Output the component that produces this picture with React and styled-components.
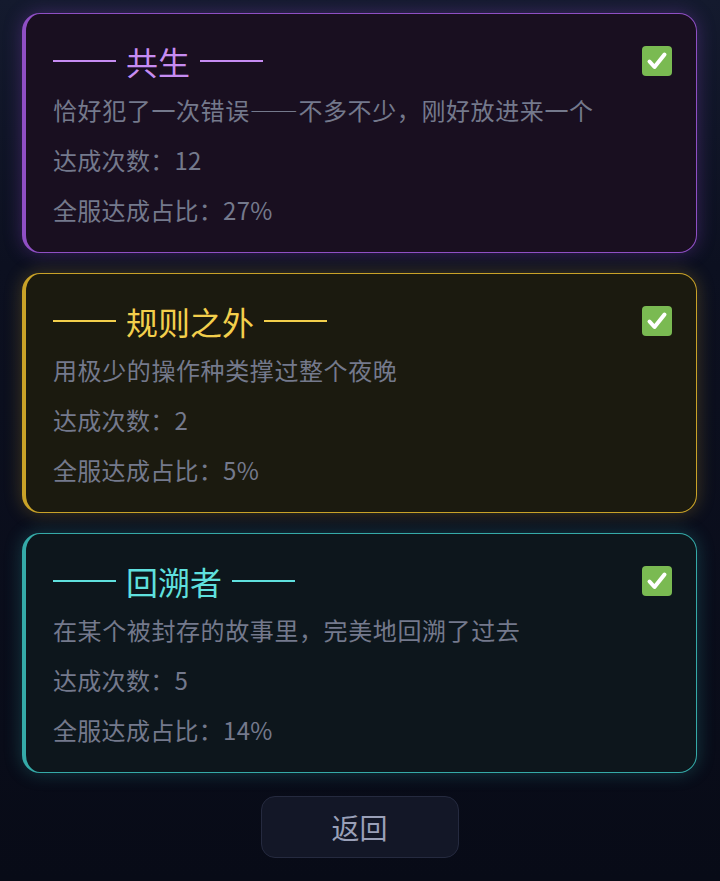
import React from 'react'
import styled, { createGlobalStyle } from 'styled-components'

const Global = createGlobalStyle`
  html, body {
    margin: 0;
    background: #080b17;
  }
  body {
    font-family: "Noto Sans CJK SC", "Noto Sans", sans-serif;
  }
`

const Page = styled.div`
  min-height: 881px;
  box-sizing: border-box;
  padding: 13px 23px 0 22px;
  background: linear-gradient(180deg, #141a2e 0%, #0c1020 30%, #080b17 100%);
  display: flex;
  flex-direction: column;
  gap: 20px;
`

const Card = styled.div`
  position: relative;
  box-sizing: border-box;
  height: 240px;
  padding: 22px 24px 0 27px;
  border-radius: 18px;
  border: 1px solid ${p => p.$border};
  border-left: 4px solid ${p => p.$border};
  background: ${p => p.$bg};
  box-shadow: 0 0 18px ${p => p.$glow};
`

const Head = styled.div`
  display: flex;
  justify-content: space-between;
  align-items: center;
  height: 49px;
`

const Title = styled.div`
  display: flex;
  align-items: center;
  gap: 10px;
  color: ${p => p.$color};
  font-size: 32px;
  line-height: 48px;
`

const Dash = styled.span`
  display: block;
  width: 63px;
  height: 2px;
  background: ${p => p.$color};
`

const Line = styled.div`
  color: #74798c;
  font-size: 24px;
  line-height: 50px;
  letter-spacing: ${p => (p.$full ? '0.6px' : '0.3px')};
  white-space: nowrap;
  font-feature-settings: ${p => (p.$full ? '"fwid"' : 'normal')};
`

const Check = () => (
  <svg width="30" height="30" viewBox="0 0 30 30" style={{ marginTop: 1 }}>
    <rect x="0" y="0" width="30" height="30" rx="4" fill="#7aba52" />
    <path d="M7.5 15.5 L12.5 21 L22.5 8.5" fill="none" stroke="#fff" strokeWidth="4" strokeLinecap="round" strokeLinejoin="round" />
  </svg>
)

const Footer = styled.div`
  display: flex;
  justify-content: center;
  padding-top: 3px;
`

const BackButton = styled.button`
  width: 198px;
  height: 62px;
  border-radius: 14px;
  border: 1px solid #252a3f;
  background: #131727;
  color: #9aa0b8;
  font-family: "Noto Sans CJK SC", sans-serif;
  font-size: 28px;
  cursor: pointer;
`

const items = [
  {
    name: '共生',
    desc: '恰好犯了一次错误——不多不少，刚好放进来一个',
    count: 12,
    rate: '27%',
    color: '#c68cf2',
    border: '#8f4fc4',
    bg: '#190f20',
    glow: 'rgba(140, 70, 200, 0.35)',
  },
  {
    name: '规则之外',
    desc: '用极少的操作种类撑过整个夜晚',
    count: 2,
    rate: '5%',
    color: '#f3cf4c',
    border: '#c9a228',
    bg: '#1b1a0f',
    glow: 'rgba(200, 160, 40, 0.3)',
  },
  {
    name: '回溯者',
    desc: '在某个被封存的故事里，完美地回溯了过去',
    count: 5,
    rate: '14%',
    color: '#5fe0de',
    border: '#35aaa8',
    bg: '#0d161c',
    glow: 'rgba(50, 170, 170, 0.3)',
  },
]

export default function App() {
  return (
    <Page>
      <Global />
      {items.map(it => (
        <Card key={it.name} $border={it.border} $bg={it.bg} $glow={it.glow}>
          <Head>
            <Title $color={it.color}>
              <Dash $color={it.color} />
              {it.name}
              <Dash $color={it.color} />
            </Title>
            <Check />
          </Head>
          <Line $full>{it.desc}</Line>
          <Line>达成次数：{it.count}</Line>
          <Line>全服达成占比：{it.rate}</Line>
        </Card>
      ))}
      <Footer>
        <BackButton>返回</BackButton>
      </Footer>
    </Page>
  )
}
